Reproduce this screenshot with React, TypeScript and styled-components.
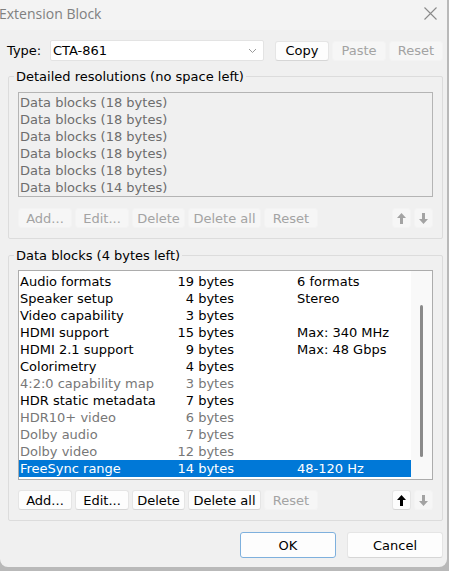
import React from "react";
import styled, { createGlobalStyle } from "styled-components";

const Global = createGlobalStyle`
  html, body { margin: 0; padding: 0; }
  body {
    width: 449px; height: 571px; overflow: hidden;
    background: #b9b9b9;
    font-family: "DejaVu Sans", "Liberation Sans", sans-serif;
  }
`;

const Window = styled.div`
  width: 447px;
  height: 567px;
  background: #f0f0f0;
  border-radius: 0 0 8px 8px;
  display: flex;
  flex-direction: column;
  font-family: "DejaVu Sans", sans-serif;
  font-size: 13px;
  color: #000;
  box-sizing: border-box;
  overflow: hidden;
`;

const TitleBar = styled.div`
  height: 30px;
  flex: none;
  display: flex;
  align-items: center;
  justify-content: space-between;
  background: #f3f3f3;
  padding: 0 10px 3px 0;
  box-sizing: border-box;
`;

const Title = styled.span`
  font-family: "Open Sans", "Noto Sans", sans-serif;
  font-size: 14px;
  color: #808080;
  margin-left: -1px;
`;

const Body = styled.div`
  padding: 10px 4px 0 7px;
  display: flex;
  flex-direction: column;
`;

const TypeRow = styled.div`
  display: flex;
  align-items: center;
  height: 21px;
  margin-bottom: 7px;
`;

const Label = styled.span`
  width: 43px;
`;

const Combo = styled.div`
  width: 214px;
  height: 21px;
  box-sizing: border-box;
  background: #fff;
  border: 1px solid #e3e3e3;
  border-radius: 2px;
  display: flex;
  align-items: center;
  justify-content: space-between;
  padding: 0 6px 0 2px;
  margin-right: 11px;
`;

const Button = styled.button<{ $w: number; $h?: number; $default?: boolean }>`
  width: ${(p) => p.$w}px;
  height: ${(p) => p.$h ?? 20}px;
  box-sizing: border-box;
  font: inherit;
  padding: 0;
  border-radius: 3px;
  background: #fdfdfd;
  color: #000;
  border: 1px solid ${(p) => (p.$default ? "#7eb0dd" : "#e5e5e5")};
  border-bottom-color: ${(p) => (p.$default ? "#7eb0dd" : "#d6d6d6")};
  display: flex;
  align-items: center;
  justify-content: center;
  white-space: nowrap;
  &:disabled {
    background: #f6f6f6;
    color: #a3a3a3;
    border-color: #f3f3f3;
  }
`;

const ButtonGroup = styled.div`
  display: flex;
  gap: 3px;
`;

const Group = styled.fieldset`
  margin: 0 0 0 1px;
  padding: 0 9px 10px 9px;
  border: 1px solid #dcdcdc;
  border-radius: 2px;
  display: flex;
  flex-direction: column;
  min-width: 0;
  & + & { margin-top: 8px; }
`;

const Legend = styled.legend`
  padding: 0 2px;
  margin-left: -4px;
  line-height: 17px;
`;

const ListBox = styled.div<{ $disabled?: boolean; $h: number; $mt: number }>`
  height: ${(p) => p.$h}px;
  margin-top: ${(p) => p.$mt}px;
  box-sizing: border-box;
  border: 1px solid ${(p) => (p.$disabled ? "#b4b4b4" : "#acacac")};
  background: ${(p) => (p.$disabled ? "#f0f0f0" : "#fff")};
  display: flex;
  overflow: hidden;
`;

const Rows = styled.div<{ $pt: number }>`
  flex: 1;
  min-width: 0;
  padding-top: ${(p) => p.$pt}px;
  display: flex;
  flex-direction: column;
`;

const Row = styled.div<{ $dim?: boolean; $sel?: boolean }>`
  height: 17px;
  line-height: 17px;
  display: grid;
  grid-template-columns: 150px 64px 1fr;
  padding-left: 1px;
  white-space: nowrap;
  color: ${(p) => (p.$sel ? "#fff" : p.$dim ? "#777" : "#000")};
  background: ${(p) => (p.$sel ? "#0078d7" : "transparent")};
`;

const Bytes = styled.span`
  text-align: right;
`;

const Desc = styled.span`
  padding-left: 63px;
`;

const SimpleRow = styled.div`
  height: 17px;
  line-height: 17px;
  padding-left: 1px;
  color: #6d6d6d;
`;

const Scroll = styled.div`
  width: 21px;
  flex: none;
  background: #f9f9f9;
  display: flex;
  justify-content: center;
  padding-top: 34px;
  box-sizing: border-box;
`;

const Thumb = styled.div`
  width: 3px;
  height: 152px;
  border-radius: 2px;
  background: #8a8a8a;
`;

const ButtonRow = styled.div<{ $mt: number }>`
  display: flex;
  justify-content: space-between;
  margin-top: ${(p) => p.$mt}px;
`;

const Footer = styled.div`
  display: flex;
  justify-content: flex-end;
  gap: 11px;
  margin-top: 11px;
`;

const Arrow = ({ up, color }: { up?: boolean; color: string }) => (
  <svg width="9" height="11" viewBox="0 0 9 11" style={{ transform: up ? "none" : "rotate(180deg)" }}>
    <polygon points="4.5,0 9,5 6,5 6,11 3,11 3,5 0,5" fill={color} />
  </svg>
);

const Chevron = () => (
  <svg width="9" height="6" viewBox="0 0 9 6">
    <polyline points="1,1 4.5,4.5 8,1" fill="none" stroke="#9a9a9a" strokeWidth="1" />
  </svg>
);

const CloseIcon = () => (
  <svg width="13" height="13" viewBox="0 0 13 13">
    <path d="M0.5 0.5 L12.5 12.5 M12.5 0.5 L0.5 12.5" stroke="#8a8a8a" strokeWidth="1.1" />
  </svg>
);

const detailed = [18, 18, 18, 18, 18, 14];

const blocks: { n: string; b: number; d?: string; dim?: boolean; sel?: boolean }[] = [
  { n: "Audio formats", b: 19, d: "6 formats" },
  { n: "Speaker setup", b: 4, d: "Stereo" },
  { n: "Video capability", b: 3 },
  { n: "HDMI support", b: 15, d: "Max: 340 MHz" },
  { n: "HDMI 2.1 support", b: 9, d: "Max: 48 Gbps" },
  { n: "Colorimetry", b: 4 },
  { n: "4:2:0 capability map", b: 3, dim: true },
  { n: "HDR static metadata", b: 7 },
  { n: "HDR10+ video", b: 6, dim: true },
  { n: "Dolby audio", b: 7, dim: true },
  { n: "Dolby video", b: 12, dim: true },
  { n: "FreeSync range", b: 14, d: "48-120 Hz", sel: true },
];

export default function App() {
  return (
    <>
      <Global />
      <Window>
        <TitleBar>
          <Title>Extension Block</Title>
          <CloseIcon />
        </TitleBar>
        <Body>
          <TypeRow>
            <Label>Type:</Label>
            <Combo>
              <span>CTA-861</span>
              <Chevron />
            </Combo>
            <ButtonGroup>
              <Button $w={54}>Copy</Button>
              <Button $w={54} disabled>Paste</Button>
              <Button $w={54} disabled>Reset</Button>
            </ButtonGroup>
          </TypeRow>
          <Group>
            <Legend>Detailed resolutions (no space left)</Legend>
            <ListBox $disabled $h={105} $mt={7}>
              <Rows $pt={1}>
                {detailed.map((b, i) => (
                  <SimpleRow key={i}>Data blocks ({b} bytes)</SimpleRow>
                ))}
              </Rows>
            </ListBox>
            <ButtonRow $mt={11}>
              <ButtonGroup>
                <Button $w={54} disabled>Add...</Button>
                <Button $w={54} disabled>Edit...</Button>
                <Button $w={53} disabled>Delete</Button>
                <Button $w={73} disabled>Delete all</Button>
                <Button $w={54} disabled>Reset</Button>
              </ButtonGroup>
              <ButtonGroup>
                <Button $w={19} disabled><Arrow up color="#a3a3a3" /></Button>
                <Button $w={19} disabled><Arrow color="#a3a3a3" /></Button>
              </ButtonGroup>
            </ButtonRow>
          </Group>
          <Group>
            <Legend>Data blocks (4 bytes left)</Legend>
            <ListBox $h={210} $mt={6}>
              <Rows $pt={2}>
                {blocks.map((r, i) => (
                  <Row key={i} $dim={r.dim} $sel={r.sel}>
                    <span>{r.n}</span>
                    <Bytes>{r.b} bytes</Bytes>
                    <Desc>{r.d ?? ""}</Desc>
                  </Row>
                ))}
              </Rows>
              <Scroll>
                <Thumb />
              </Scroll>
            </ListBox>
            <ButtonRow $mt={10}>
              <ButtonGroup>
                <Button $w={54}>Add...</Button>
                <Button $w={54}>Edit...</Button>
                <Button $w={53}>Delete</Button>
                <Button $w={73}>Delete all</Button>
                <Button $w={54} disabled>Reset</Button>
              </ButtonGroup>
              <ButtonGroup>
                <Button $w={19}><Arrow up color="#000" /></Button>
                <Button $w={19} disabled><Arrow color="#a3a3a3" /></Button>
              </ButtonGroup>
            </ButtonRow>
          </Group>
          <Footer>
            <Button $w={96} $h={26} $default>OK</Button>
            <Button $w={96} $h={26}>Cancel</Button>
          </Footer>
        </Body>
      </Window>
    </>
  );
}
